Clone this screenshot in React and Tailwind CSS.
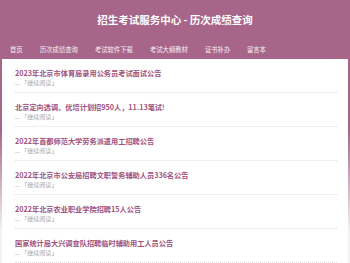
import React from 'react';

const navItems = [
  { label: '首页', w: 'w-[30px]' },
  { label: '历次成绩查询', w: 'w-[55px]' },
  { label: '考试软件下载', w: 'w-[55px]' },
  { label: '考试大纲教材', w: 'w-[55px]' },
  { label: '证书补办', w: 'w-[42px]' },
  { label: '留言本', w: 'w-[40px]' },
];

const posts = [
  '2023年北京市体育局录用公务员考试面试公告',
  '北京定向选调、优培计划招950人，11.13笔试!',
  '2022年首都师范大学劳务派遣用工招聘公告',
  '2022年北京市公安局招聘文职警务辅助人员336名公告',
  '2022年北京农业职业学院招聘15人公告',
  '国家统计局大兴调查队招聘临时辅助用工人员公告',
];

export default function App() {
  return (
    <div
      className="min-h-screen bg-[linear-gradient(#a8658a_0,#a8658a_130px,#f2f2f2_230px)]"
      style={{ fontFamily: '"Noto Sans CJK SC", "Noto Sans", sans-serif' }}
    >
      {/* Header */}
      <div className="h-[59px] flex flex-col">
        <h1 className="h-[42px] flex items-center justify-center text-white font-bold text-[10.5px] pb-[2px]">
          招生考试服务中心 - 历次成绩查询
        </h1>
        <nav className="flex items-center pl-[10px] h-[17px] pb-[2px]">
          {navItems.map((item) => (
            <a key={item.label} className={`${item.w} text-[6.3px] text-white/90 whitespace-nowrap`}>
              {item.label}
            </a>
          ))}
        </nav>
      </div>

      {/* List */}
      <div className="mx-[2px] bg-white min-h-[204px] pl-[13px] pr-[11px]">
        {posts.map((title) => (
          <div key={title} className="pt-[9px] pb-[5px] border-b border-dotted border-[#e2e2e2]">
            <div className="h-[10px] leading-[10px] text-[7.2px] font-bold text-[#a0507c] whitespace-nowrap">
              {title}
            </div>
            <div className="h-[9px] leading-[9px] text-[6px] text-[#999] whitespace-nowrap">
              ... 「<span className="text-[#aaa]">继续阅读</span>」
            </div>
          </div>
        ))}
      </div>
    </div>
  );
}
